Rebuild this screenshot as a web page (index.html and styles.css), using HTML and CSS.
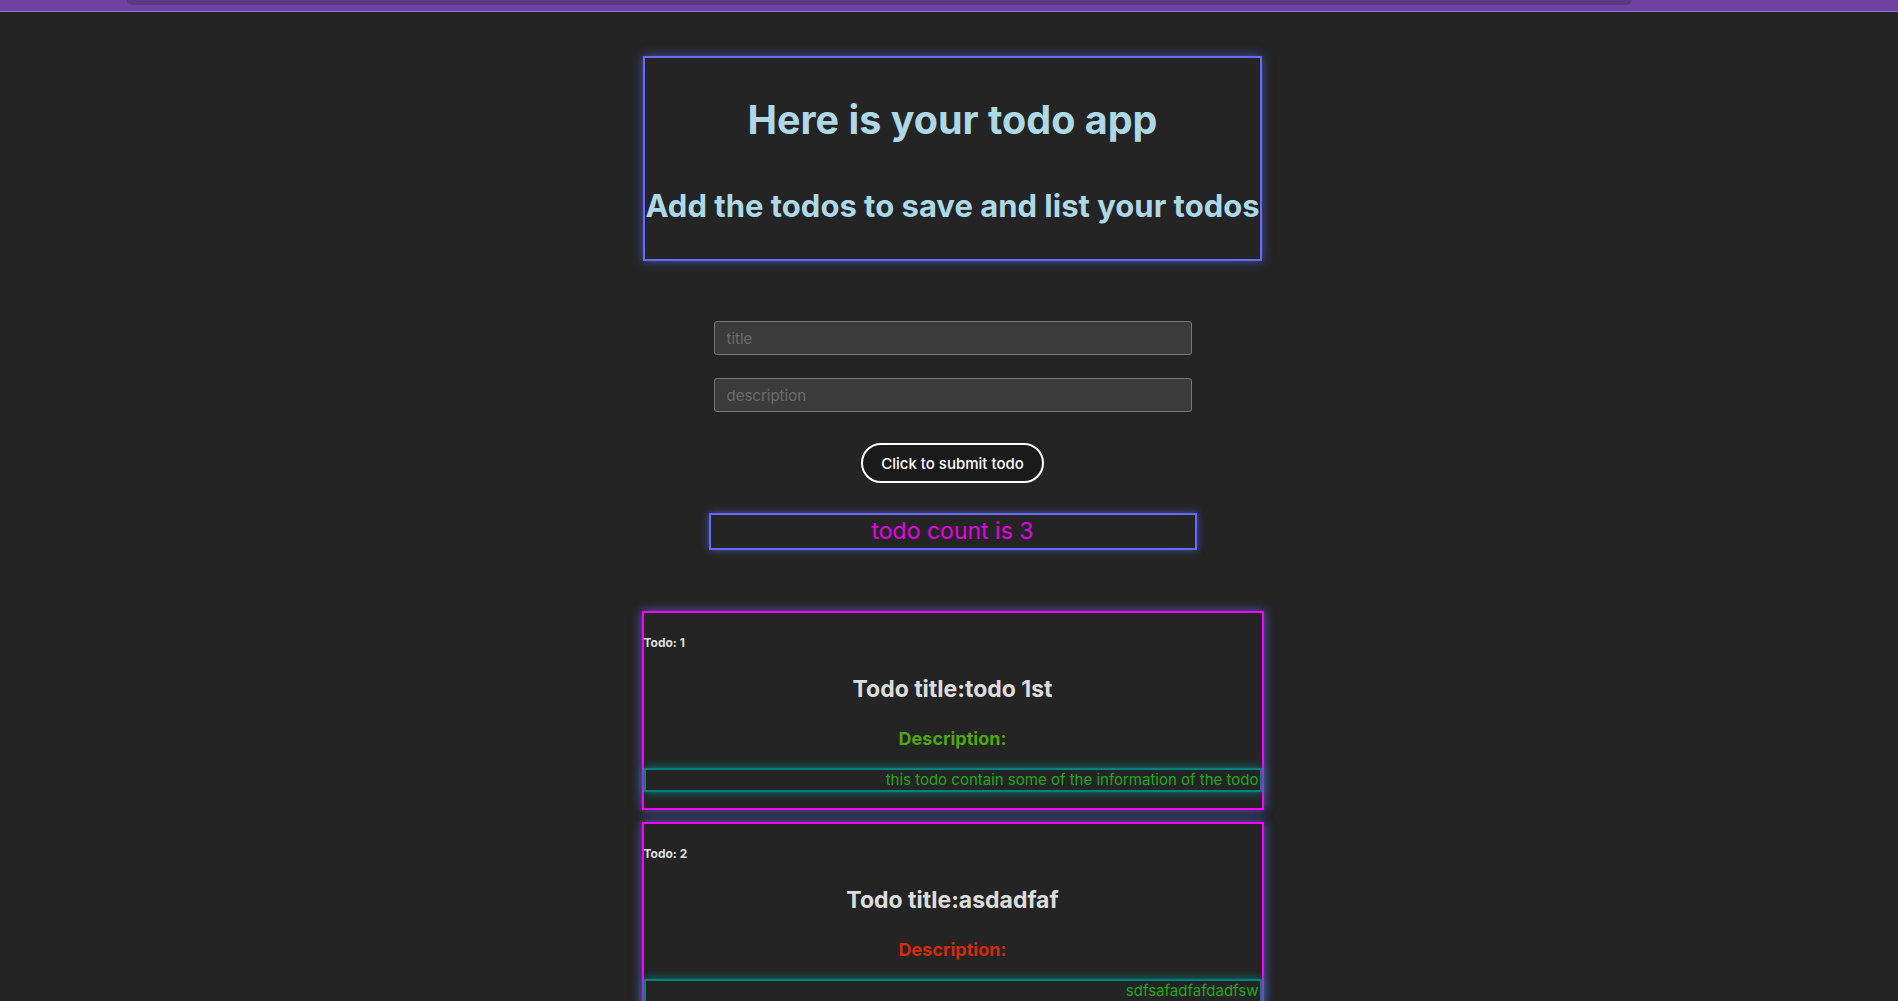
FILE: index.html
```html
<!DOCTYPE html>
<html lang="en">
<head>
<meta charset="utf-8">
<title>Todo app</title>
<link rel="stylesheet" href="styles.css">
</head>
<body>
<div class="topbar"><div class="topbar-tab"></div></div>
<main class="app">
  <header class="hero">
    <h1 class="hero-title">Here is your todo app</h1>
    <h2 class="hero-sub">Add the todos to save and list your todos</h2>
  </header>
  <form class="todo-form">
    <input class="field" type="text" placeholder="title">
    <input class="field" type="text" placeholder="description">
    <button class="submit" type="button">Click to submit todo</button>
  </form>
  <div class="count">todo count is 3</div>
  <section class="todos">
    <article class="todo">
      <h5 class="todo-num">Todo: 1</h5>
      <h2 class="todo-title">Todo title:todo 1st</h2>
      <h3 class="todo-label label-green">Description:</h3>
      <p class="todo-desc">this todo contain some of the information of the todo</p>
    </article>
    <article class="todo">
      <h5 class="todo-num">Todo: 2</h5>
      <h2 class="todo-title">Todo title:asdadfaf</h2>
      <h3 class="todo-label label-red">Description:</h3>
      <p class="todo-desc">sdfsafadfafdadfsw</p>
    </article>
    <article class="todo">
      <h5 class="todo-num">Todo: 3</h5>
      <h2 class="todo-title">Todo title:third</h2>
      <h3 class="todo-label label-green">Description:</h3>
      <p class="todo-desc">third todo</p>
    </article>
  </section>
</main>
</body>
</html>
```
FILE: styles.css
```css
html, body {
  margin: 0;
  padding: 0;
}

body {
  background: #242424;
  color: rgba(255, 255, 255, 0.87);
  font-family: "Inter", "Noto Sans", sans-serif;
  font-size: 16px;
}

.topbar {
  height: 11px;
  background: #6f42a1;
  border-bottom: 1px solid #9c72cd;
  display: flex;
  padding: 0 266px 0 127px;
}

.topbar-tab {
  flex: 1;
  height: 5px;
  background: #5b3a81;
  border-radius: 0 0 6px 6px;
}

.app {
  display: flex;
  flex-direction: column;
  align-items: center;
  padding: 44px 0 40px 7px;
}

.hero {
  border: 2px solid #646cff;
  box-shadow: 0 0 10px rgba(100, 108, 255, 0.6);
  padding: 38px 0 35px;
  text-align: center;
}

.hero-title {
  margin: 0 0 44px;
  font-size: 39.5px;
  line-height: 48px;
  font-weight: 700;
  color: #add8e6;
}

.hero-sub {
  margin: 0;
  font-size: 31px;
  line-height: 36px;
  font-weight: 700;
  color: #add8e6;
  white-space: nowrap;
}

.todo-form {
  display: flex;
  flex-direction: column;
  align-items: center;
  margin-top: 60px;
}

.field {
  width: 478px;
  height: 34px;
  box-sizing: border-box;
  background: #3b3b3b;
  border: 1px solid #777777;
  border-radius: 3px;
  padding: 0 12px;
  font-family: "Inter", sans-serif;
  font-size: 15px;
  color: #dddddd;
  outline: none;
}

.field::placeholder {
  color: #6c6c6c;
}

.field + .field {
  margin-top: 23px;
}

.submit {
  margin-top: 31px;
  height: 40px;
  padding: 0 18px;
  border: 2px solid #ffffff;
  border-radius: 20px;
  background: #1a1a1a;
  color: #ffffff;
  font-family: "Inter", sans-serif;
  font-size: 15px;
  font-weight: 500;
}

.count {
  margin-top: 30px;
  width: 488px;
  height: 37px;
  box-sizing: border-box;
  border: 2px solid #646cff;
  box-shadow: 0 0 8px rgba(100, 108, 255, 0.6);
  text-align: center;
  font-size: 23px;
  line-height: 32px;
  color: #e600e6;
}

.todos {
  margin-top: 61px;
  display: flex;
  flex-direction: column;
  gap: 12px;
}

.todo {
  width: 622px;
  box-sizing: border-box;
  border: 2px solid #ff00ff;
  box-shadow: 0 0 10px rgba(100, 108, 255, 0.75);
}

.todo-num {
  margin: 21px 0 0;
  font-size: 12px;
  line-height: 17px;
  font-weight: 700;
}

.todo-title {
  margin: 25px 0 0;
  font-size: 23px;
  line-height: 27px;
  font-weight: 700;
  text-align: center;
}

.todo-label {
  margin: 25px 0 0;
  font-size: 18px;
  line-height: 22px;
  font-weight: 700;
  text-align: center;
}

.label-green {
  color: #4fa80e;
}

.label-red {
  color: #d12c0c;
}

.todo-desc {
  margin: 18px 0 16px;
  border: 2px solid #008080;
  box-shadow: 0 0 8px #008080;
  font-size: 15px;
  line-height: 20px;
  text-align: right;
  padding-right: 1px;
  color: #20a820;
}
```
